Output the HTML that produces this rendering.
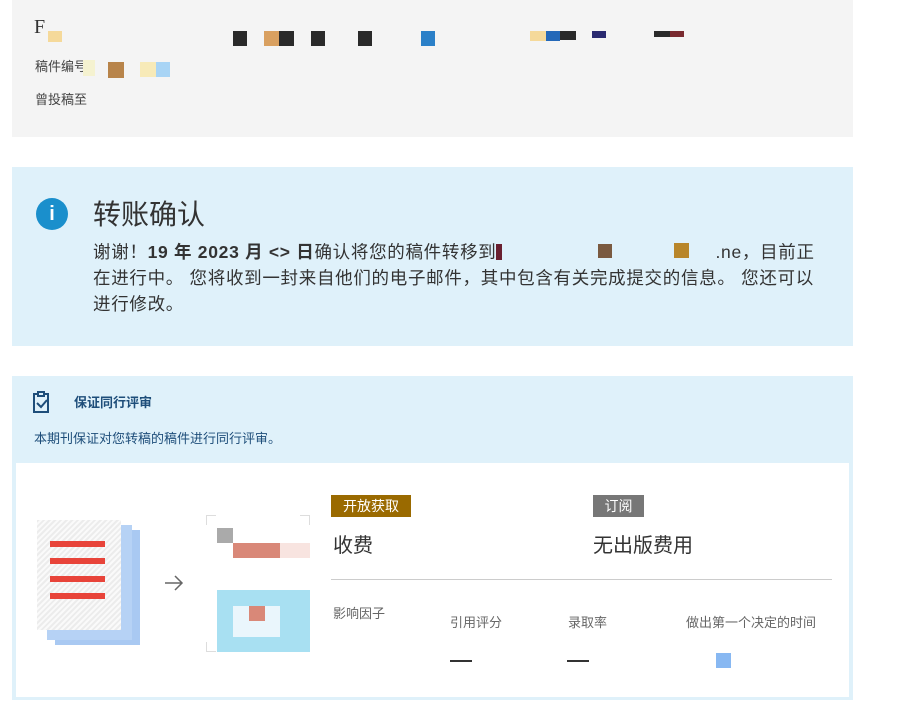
<!DOCTYPE html>
<html><head><meta charset="utf-8"><style>
*{margin:0;padding:0;box-sizing:border-box}
body{width:900px;height:723px;background:#fff;position:relative;overflow:hidden;font-family:"Liberation Sans","Noto Sans CJK SC",sans-serif;color:#333}
.a{position:absolute}
.sq{position:absolute}
</style></head><body>
<div class="a" style="left:12px;top:0;width:841px;height:137px;background:#f4f4f4"></div>
<div class="a" style="left:34px;top:16px;font-size:20px;font-family:'Liberation Serif',serif;color:#333">F</div>
<div class="sq" style="left:48px;top:31px;width:14px;height:11px;background:#f5d99a"></div>
<div class="sq" style="left:233px;top:31px;width:14px;height:15px;background:#2a2a2a"></div>
<div class="sq" style="left:264px;top:31px;width:15px;height:15px;background:#d9a060"></div>
<div class="sq" style="left:279px;top:31px;width:15px;height:15px;background:#2a2a2a"></div>
<div class="sq" style="left:311px;top:31px;width:14px;height:15px;background:#2a2a2a"></div>
<div class="sq" style="left:358px;top:31px;width:14px;height:15px;background:#2a2a2a"></div>
<div class="sq" style="left:421px;top:31px;width:14px;height:15px;background:#2b80c8"></div>
<div class="sq" style="left:530px;top:31px;width:16px;height:10px;background:#f5d99a"></div>
<div class="sq" style="left:546px;top:31px;width:14px;height:10px;background:#2468b8"></div>
<div class="sq" style="left:560px;top:31px;width:16px;height:9px;background:#2a2a2a"></div>
<div class="sq" style="left:592px;top:31px;width:14px;height:7px;background:#2a2a70"></div>
<div class="sq" style="left:654px;top:31px;width:16px;height:6px;background:#2a2a2a"></div>
<div class="sq" style="left:670px;top:31px;width:14px;height:6px;background:#7a2a30"></div>
<div class="a" style="left:35px;top:56px;font-size:13px;color:#444">稿件编号</div>
<div class="sq" style="left:83px;top:60px;width:12px;height:16px;background:#f5f2d0"></div>
<div class="sq" style="left:108px;top:62px;width:16px;height:16px;background:#b8844a"></div>
<div class="sq" style="left:140px;top:62px;width:16px;height:15px;background:#f7eab8"></div>
<div class="sq" style="left:156px;top:62px;width:14px;height:15px;background:#a8d4f5"></div>
<div class="a" style="left:35px;top:89px;font-size:13px;color:#444">曾投稿至</div>

<div class="a" style="left:12px;top:167px;width:841px;height:179px;background:#dff1fa"></div>
<div class="a" style="left:36px;top:198px;width:32px;height:32px;border-radius:50%;background:#1a8fcc;color:#fff;text-align:center;font-weight:bold;font-size:20px;line-height:32px">i</div>
<div class="a" style="left:93px;top:193px;font-size:28px;color:#333">转账确认</div>
<div class="a" style="left:93px;top:239px;white-space:nowrap;font-size:17.5px;letter-spacing:0.7px;line-height:26px;color:#333">谢谢！<b>19 年 2023 月 &lt;&gt; 日</b>确认将您的稿件转移到<span style="display:inline-block;width:6px;height:16px;background:#6a2030;vertical-align:-2px"></span><span style="display:inline-block;width:96px"></span><span style="display:inline-block;width:14px;height:14px;background:#7a5a40"></span><span style="display:inline-block;width:62px"></span><span style="display:inline-block;width:15px;height:15px;background:#b8862a"></span><span style="display:inline-block;width:26px"></span>.ne，目前正<br>在进行中。 您将收到一封来自他们的电子邮件，其中包含有关完成提交的信息。 您还可以<br>进行修改。</div>

<div class="a" style="left:12px;top:376px;width:841px;height:324px;background:#dff1fa"></div>
<svg class="a" style="left:32px;top:390px" width="20" height="24" viewBox="0 0 20 24"><path d="M6 4H2v18h14V4h-4M6 2h6v4H6z" fill="none" stroke="#1e4e7a" stroke-width="2"/><path d="M5 13l4 4 6-7" fill="none" stroke="#1e4e7a" stroke-width="2"/></svg>
<div class="a" style="left:74px;top:392px;font-size:13px;font-weight:bold;color:#1e4e7a">保证同行评审</div>
<div class="a" style="left:34px;top:428px;font-size:13px;color:#1e4e7a">本期刊保证对您转稿的稿件进行同行评审。</div>
<div class="a" style="left:16px;top:463px;width:833px;height:234px;background:#fff"></div>

<div class="a" style="left:55px;top:530px;width:85px;height:115px;background:#a9c9f2"></div>
<div class="a" style="left:47px;top:525px;width:85px;height:115px;background:#b6d2f5"></div>
<div class="a" style="left:37px;top:520px;width:84px;height:110px;background:repeating-linear-gradient(135deg,#ececec 0 2px,#fafafa 2px 4px)"></div>
<div class="sq" style="left:50px;top:541px;width:55px;height:6px;background:#e8443a"></div>
<div class="sq" style="left:50px;top:558px;width:55px;height:6px;background:#e8443a"></div>
<div class="sq" style="left:50px;top:576px;width:55px;height:6px;background:#e8443a"></div>
<div class="sq" style="left:50px;top:593px;width:55px;height:6px;background:#e8443a"></div>
<svg class="a" style="left:164px;top:574px" width="20" height="18" viewBox="0 0 20 18"><path d="M1 9h17M11 2l7 7-7 7" fill="none" stroke="#666" stroke-width="1.5"/></svg>
<div class="a" style="left:206px;top:515px;width:104px;height:137px;border:1px solid #ddd"></div>
<div class="a" style="left:216px;top:514px;width:84px;height:139px;background:#fff"></div>
<div class="a" style="left:205px;top:525px;width:106px;height:117px;background:#fff"></div>
<div class="sq" style="left:217px;top:528px;width:16px;height:15px;background:#aaa"></div>
<div class="sq" style="left:233px;top:543px;width:47px;height:15px;background:#d98878"></div>
<div class="sq" style="left:280px;top:543px;width:30px;height:15px;background:#f8e4e0"></div>
<div class="sq" style="left:217px;top:590px;width:93px;height:62px;background:#a8e0f2"></div>
<div class="sq" style="left:233px;top:606px;width:47px;height:31px;background:#eaf6fc"></div>
<div class="sq" style="left:249px;top:606px;width:16px;height:15px;background:#d98878"></div>

<div class="a" style="left:331px;top:495px;width:80px;height:22px;background:#9a6a00;color:#fff;font-size:14px;line-height:22px;text-align:center">开放获取</div>
<div class="a" style="left:333px;top:529px;font-size:20px;color:#333">收费</div>
<div class="a" style="left:593px;top:495px;width:51px;height:22px;background:#777;color:#fff;font-size:14px;line-height:22px;text-align:center">订阅</div>
<div class="a" style="left:593px;top:529px;font-size:20px;color:#333">无出版费用</div>
<div class="a" style="left:331px;top:579px;width:501px;height:1px;background:#ccc"></div>
<div class="a" style="left:333px;top:603px;font-size:13px;color:#666">影响因子</div>
<div class="a" style="left:450px;top:612px;font-size:13px;color:#666">引用评分</div>
<div class="a" style="left:568px;top:612px;font-size:13px;color:#666">录取率</div>
<div class="a" style="left:686px;top:612px;font-size:13px;color:#666">做出第一个决定的时间</div>
<div class="a" style="left:450px;top:660px;width:22px;height:2px;background:#333"></div>
<div class="a" style="left:567px;top:660px;width:22px;height:2px;background:#333"></div>
<div class="sq" style="left:716px;top:653px;width:15px;height:15px;background:#88b8f2"></div>
</body></html>
